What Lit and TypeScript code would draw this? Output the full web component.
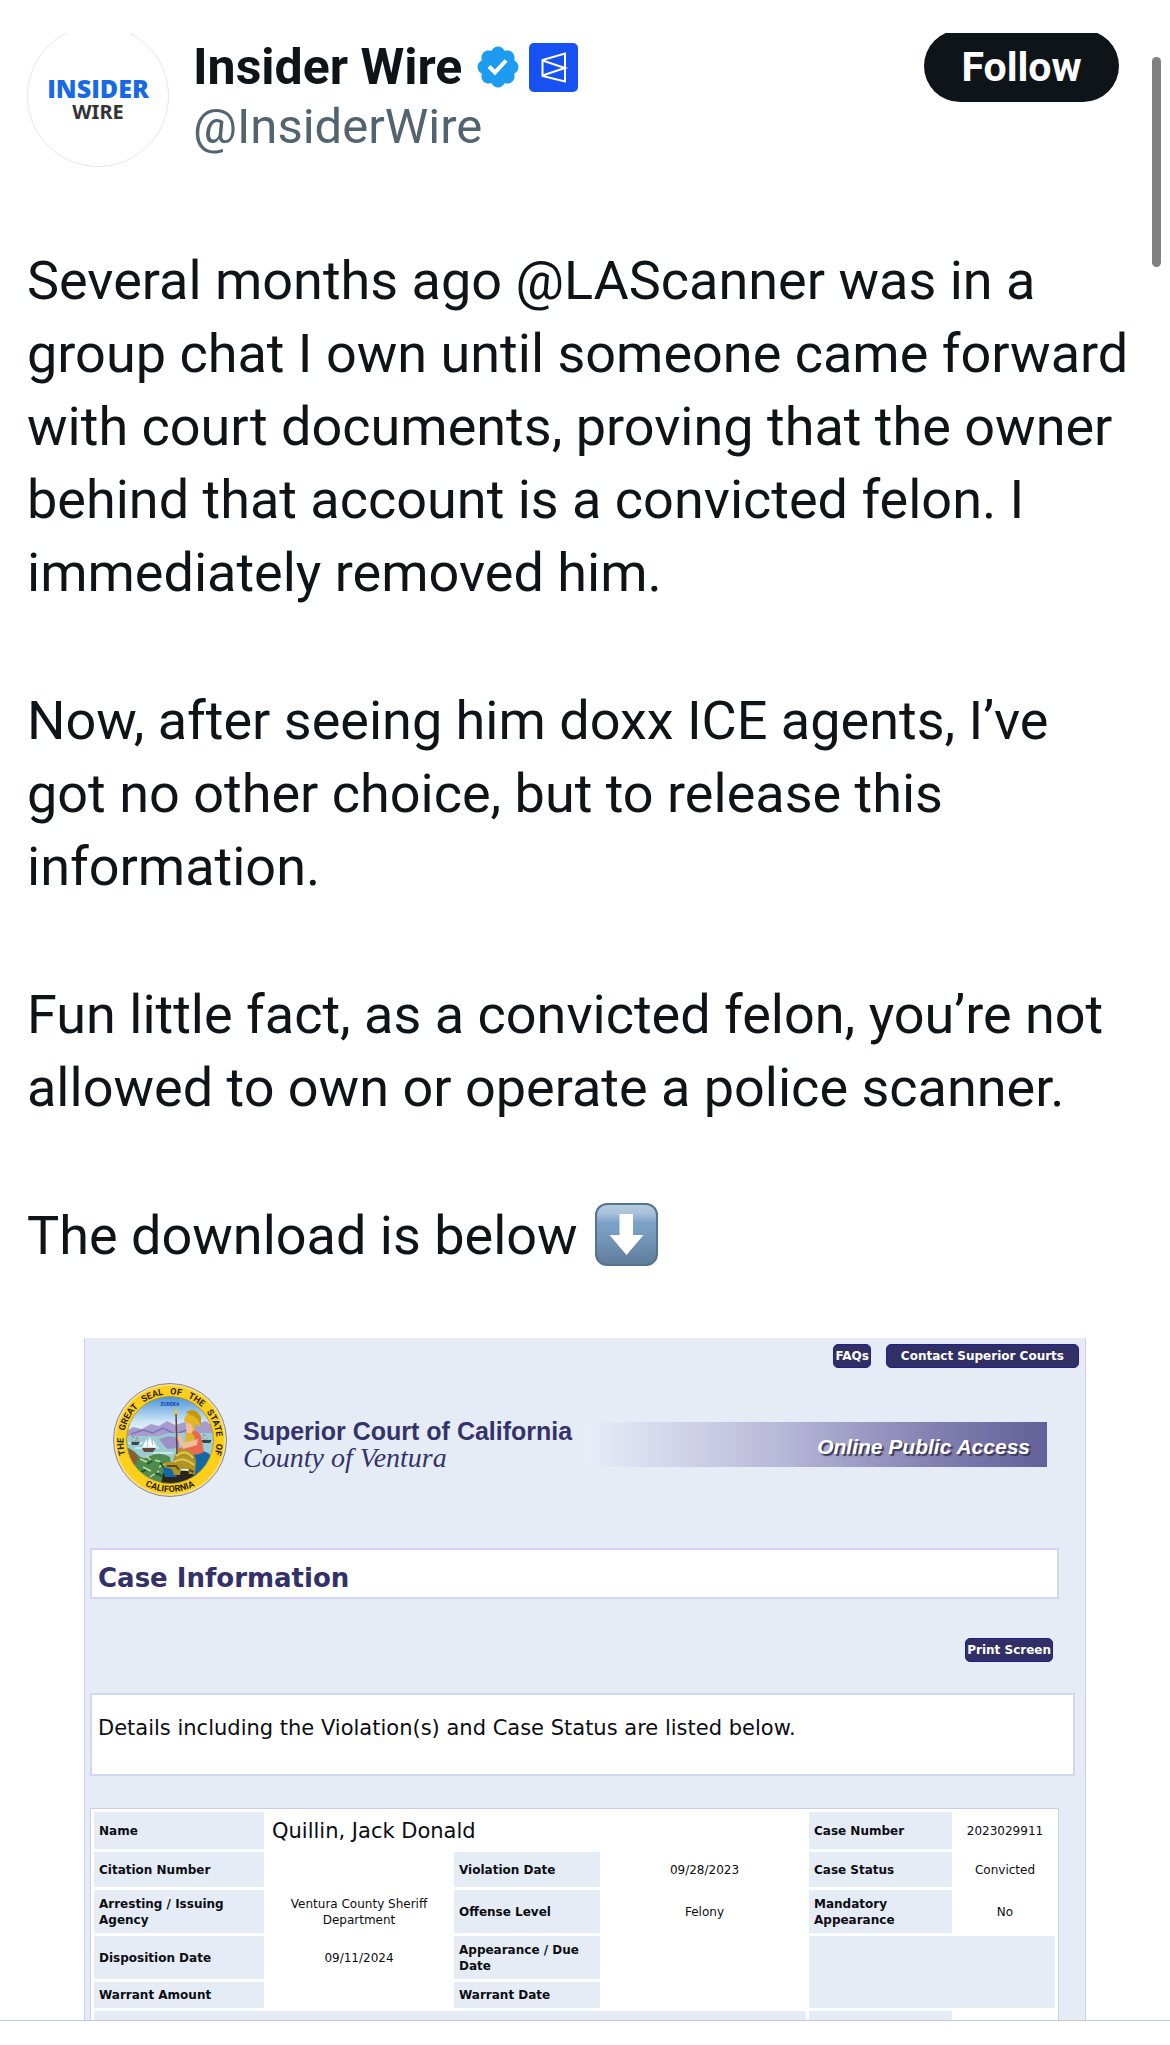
import { LitElement, html, css, nothing } from "lit";
import { customElement } from "lit/decorators.js";
import { classMap } from "lit/directives/class-map.js";

interface Cell {
  text?: string;
  label?: boolean;
  large?: boolean;
  colspan?: number;
  rowspan?: number;
}

const CASE_ROWS: { size: string; cells: Cell[] }[] = [
  {
    size: "tall",
    cells: [
      { text: "Name", label: true },
      { text: "Quillin, Jack Donald", large: true, colspan: 3 },
      { text: "Case Number", label: true },
      { text: "2023029911" },
    ],
  },
  {
    size: "medium",
    cells: [
      { text: "Citation Number", label: true },
      {},
      { text: "Violation Date", label: true },
      { text: "09/28/2023" },
      { text: "Case Status", label: true },
      { text: "Convicted" },
    ],
  },
  {
    size: "double",
    cells: [
      { text: "Arresting / Issuing Agency", label: true },
      { text: "Ventura County Sheriff Department" },
      { text: "Offense Level", label: true },
      { text: "Felony" },
      { text: "Mandatory Appearance", label: true },
      { text: "No" },
    ],
  },
  {
    size: "double",
    cells: [
      { text: "Disposition Date", label: true },
      { text: "09/11/2024" },
      { text: "Appearance / Due Date", label: true },
      {},
      { label: true, colspan: 2, rowspan: 2 },
    ],
  },
  {
    size: "short",
    cells: [
      { text: "Warrant Amount", label: true },
      {},
      { text: "Warrant Date", label: true },
      {},
    ],
  },
  {
    size: "tall",
    cells: [{ label: true, colspan: 4 }, { label: true }, {}],
  },
];

@customElement("state-seal")
class StateSeal extends LitElement {
  static styles = css`
    :host {
      display: block;
      flex: none;
    }
    svg {
      display: block;
    }
    .ring {
      font: bold 9px Roboto, "Liberation Sans", sans-serif;
      fill: #2a2208;
    }
    .motto {
      font: bold 5px Roboto, "Liberation Sans", sans-serif;
      fill: #1c3fa8;
    }
  `;

  render() {
    const gap = "\u00a0\u00a0\u00a0";
    return html`
      <svg width="114" height="114" viewBox="0 0 114 114" role="img" aria-label="State seal">
        <defs>
          <linearGradient id="sky" x1="0" y1="0" x2="0" y2="1">
            <stop offset="0" stop-color="#3f8fd6" />
            <stop offset="0.3" stop-color="#cfe6f6" />
            <stop offset="0.5" stop-color="#ffffff" />
          </linearGradient>
          <clipPath id="disc"><circle cx="57" cy="57" r="43.5" /></clipPath>
          <path id="top" d="M 13 73 A 46.500 46.500 0 1 1 101 73" />
          <path id="bottom" d="M 12 84 A 53 53 0 0 0 102 84" />
        </defs>
        <circle cx="57" cy="57" r="56.500" fill="#f7df86" stroke="#8a8598" />
        <circle cx="57" cy="57" r="54" fill="#fccf1b" />
        <g clip-path="url(#disc)">
          <rect x="12" y="12" width="90" height="90" fill="url(#sky)" />
          <path d="M12 49 L20 44 L29 46 L38 41 L46 43 L54 38 L62 42 L72 39 L84 41 L93 38 L103 46 V62 H12Z" fill="#a69ccd" />
          <path d="M18 51 L30 47 L40 50 L50 45 L62 51 L74 47" fill="none" stroke="#7c75b4" stroke-width="1.500" />
          <path d="M12 53 H46 L56 50 H103 V86 H12Z" fill="#9ccbd2" />
          <path d="M46 56 L56 53 L66 55 V65 L54 66 L49 60Z" fill="#9c90c6" />
          <path d="M15 60 H30 M22 65 H46 M40 70 H60 M86 58 H100" stroke="#d9eff0" stroke-width="1.500" />
          <path d="M18 59 h9 l-2 3 h-6z M88 57 h11 l-2 3 h-7z" fill="#33464c" />
          <path d="M20 58 v-5 l3 5z M24 58 v-4 l2 4z M91 56 v-5 l3 5z" fill="#f4f6f4" stroke="#33464c" stroke-width="0.400" />
          <path d="M29 65 H43 L40 69 H31Z" fill="#5a4a3a" />
          <path d="M30 64 Q31 59 34 56 V64Z M35 64 Q34 58 37 54 L40 64Z M40 64 L40 57 L44 64Z" fill="#ffffff" />
          <path d="M12 64 Q20 66 25 72 Q30 78 37 73 Q45 68 57 74 L61 102 H12Z" fill="#4f8b50" />
          <path d="M12 66 Q23 67 25 76 L19 86 L12 82Z" fill="#8c5a38" />
          <path d="M27 76 l7 3 M30 84 l8 4 M42 77 l6 2 M37 94 l9 -6 M46 84 l6 -3 M33 73 l5 4" stroke="#c9e08e" stroke-width="1.500" />
          <path d="M34 81 l5 -3 M42 90 l7 3 M47 79 l4 6 M28 89 l5 -2" stroke="#1d5a35" stroke-width="2" />
          <path d="M50 90 Q70 84 92 92 L86 102 H48Z" fill="#29261d" />
          <path d="M79 69 Q92 66 97 72 L96 84 Q91 95 80 93Z" fill="#1668a4" />
          <path d="M50 86 Q54 78 60 82 L64 94 H52Z" fill="#1668a4" />
          <path d="M74 48 Q85 46 88 53 L91 69 Q83 74 68 70 L64 66 L74 62Z" fill="#e96a4f" />
          <path d="M73 48 Q80 48 82 56 L79 63 L72 62Z" fill="#dcb52a" />
          <path d="M64 55 L68 52 L71 60 L85 56 L84 62 L70 66Z" fill="#f3bd9c" />
          <path d="M73 39 Q80 36 81 43 L79 50 H74 L73 45Z" fill="#f3bd9c" />
          <path d="M71 38 Q72 31 78 29 Q87 31 88 43 Q85 44 83 40 L81 49 L78 41Z" fill="#e3b71f" />
          <path d="M73 29 Q82 23 88 34 L88 43 Q84 32 77 32Z" fill="#c5980d" />
          <path d="M60 79 Q62 66 71 66 Q82 68 83 79 L82 91 H76 L75 86 H68 L67 92 H61 L59 86 L51 84 L52 79Z" fill="#b19524" />
          <path d="M63 73 Q72 65 80 75 M61 79 Q70 73 81 82" fill="none" stroke="#e1ca54" stroke-width="2" />
          <path d="M54 83 h9 l3 4 M76 87 l5 2" fill="none" stroke="#5c4a12" stroke-width="2" />
          <path d="M63 29 L64 71" stroke="#6f3b30" stroke-width="1.500" />
          <path d="M63 24 L65 31 H61Z" fill="#e8c43a" />
          <text class="motto" x="57" y="23" text-anchor="middle">EUREKA</text>
        </g>
        <circle cx="57" cy="57" r="43.500" fill="none" stroke="#a88d28" stroke-width="0.800" />
        <text class="ring" text-anchor="middle"><textPath href="#top" startOffset="50%">${["THE", "GREAT", "SEAL", "OF", "THE", "STATE", "OF"].join(gap)}</textPath></text>
        <text class="ring" text-anchor="middle"><textPath href="#bottom" startOffset="50%">CALIFORNIA</textPath></text>
      </svg>
    `;
  }
}

@customElement("court-record")
class CourtRecord extends LitElement {
  static styles = css`
    :host {
      display: block;
      box-sizing: border-box;
      padding: 5px 6px 0 5px;
      background: #e6ecf6;
      border: 1px solid #ccccf4;
      border-top-color: #e6ecf6;
      border-bottom: 0;
      color: #0c0c12;
      font: 12px/16px "DejaVu Sans", sans-serif;
    }
    .links {
      display: flex;
      justify-content: flex-end;
      gap: 15px;
    }
    .link {
      box-sizing: border-box;
      height: 24px;
      padding: 0 1px;
      border: 1px solid #20208c;
      border-radius: 5px;
      background: #312f66;
      color: #fff;
      font: bold 12px/22px "DejaVu Sans", sans-serif;
      text-align: center;
      text-decoration: none;
    }
    .contact {
      padding: 0 14px;
    }
    .masthead {
      display: flex;
      align-items: center;
      gap: 16px;
      margin: 15px 32px 0 23px;
    }
    .court {
      padding-top: 8px;
      color: #35336b;
      white-space: nowrap;
    }
    .title {
      margin: 0;
      font: bold 25px/28px "Liberation Sans", sans-serif;
    }
    .county {
      margin: 0;
      font: italic 28px/26px "Liberation Serif", serif;
    }
    .access {
      flex: 1;
      box-sizing: border-box;
      height: 45px;
      margin-top: 8px;
      padding: 6px 17px 0 0;
      background: linear-gradient(90deg, #e8ecf8, #b8b8d8 42%, #7f7cae 78%, #636099);
      color: #fff;
      font: italic bold 21px/37px "Liberation Sans", sans-serif;
      text-align: right;
      text-shadow: 2px 2px 1px #3c3a5c;
    }
    .box {
      box-sizing: border-box;
      border: 2px solid #d3d5f4;
      background: #fff;
    }
    .heading {
      margin: 51px 20px 0 0;
      padding: 10px 6px 0;
      height: 51px;
      color: #33306a;
      font: bold 26px/36px "DejaVu Sans", sans-serif;
    }
    .print-row {
      display: flex;
      justify-content: flex-end;
      margin: 39px 26px 31px 0;
    }
    .note {
      margin: 0 4px 32px 0;
      padding: 19px 6px 31px;
      font-size: 21px;
      line-height: 29px;
    }
    .case {
      width: calc(100% - 20px);
      table-layout: fixed;
      border: 1px solid #ccccf8;
      border-collapse: separate;
      border-spacing: 3px;
      background: #fff;
    }
    .c1 {
      width: 170px;
    }
    .c2 {
      width: 184px;
    }
    .c3 {
      width: 146px;
    }
    .c5 {
      width: 143px;
    }
    .c6 {
      width: 100px;
    }
    .cell {
      padding: 0 4px;
      text-align: center;
      vertical-align: middle;
    }
    .label {
      padding: 0 5px;
      background: #e6ecf6;
      text-align: left;
    }
    .large {
      padding: 0 5px;
      font-size: 21px;
      text-align: left;
    }
    .tall {
      height: 37px;
    }
    .medium {
      height: 35px;
    }
    .double {
      height: 43px;
    }
    .short {
      height: 26px;
    }
  `;

  private cell(c: Cell) {
    const classes = classMap({ cell: true, label: !!c.label, large: !!c.large });
    const cols = c.colspan ?? nothing;
    const rows = c.rowspan ?? nothing;
    return c.label && c.text
      ? html`<th class=${classes} scope="row">${c.text}</th>`
      : html`<td class=${classes} colspan=${cols} rowspan=${rows}>${c.text ?? ""}</td>`;
  }

  render() {
    return html`
      <nav class="links">
        <a class="link" href="#faqs">FAQs</a>
        <a class="link contact" href="#contact">Contact Superior Courts</a>
      </nav>
      <header class="masthead">
        <state-seal></state-seal>
        <div class="court">
          <h2 class="title">Superior Court of California</h2>
          <p class="county">County of Ventura</p>
        </div>
        <div class="access">Online Public Access</div>
      </header>
      <h3 class="box heading">Case Information</h3>
      <div class="print-row"><button class="link" type="button">Print Screen</button></div>
      <p class="box note">Details including the Violation(s) and Case Status are listed below.</p>
      <table class="case">
        <colgroup>
          <col class="c1" /><col class="c2" /><col class="c3" /><col /><col class="c5" /><col class="c6" />
        </colgroup>
        <tbody>
          ${CASE_ROWS.map((r) => html`<tr class=${r.size}>${r.cells.map((c) => this.cell(c))}</tr>`)}
        </tbody>
      </table>
    `;
  }
}

@customElement("app-root")
class AppRoot extends LitElement {
  static styles = css`
    :host {
      display: grid;
      grid-template-rows: 33px minmax(0, 1fr) 25px;
      position: relative;
      height: 100vh;
      background: #fff;
      color: #0f1419;
      font-family: Roboto, "Liberation Sans", sans-serif;
    }
    .feed {
      grid-row: 2;
      overflow: hidden;
    }
    .footer {
      grid-row: 3;
      box-sizing: border-box;
      border-top: 1px solid #bccbd8;
    }
    .author {
      display: flex;
      align-items: flex-start;
      gap: 24px;
      margin-top: -8px;
      padding: 0 51px 0 27px;
    }
    .avatar {
      box-sizing: border-box;
      display: flex;
      flex: none;
      flex-direction: column;
      align-items: center;
      justify-content: center;
      width: 142px;
      height: 142px;
      padding-top: 8px;
      border: 1px solid #e4e7ea;
      border-radius: 50%;
    }
    .brand {
      color: #1769e6;
      font: 800 25px/24px "Open Sans", sans-serif;
    }
    .sub {
      color: #333;
      font: bold 20px/24px "Noto Sans", sans-serif;
    }
    .names {
      flex: 1;
      padding-top: 12px;
    }
    .name {
      display: flex;
      align-items: center;
      margin: 0;
      font-size: 50px;
      line-height: 60px;
    }
    .verified {
      margin: 0 7px 0 12px;
    }
    .handle {
      display: inline-block;
      color: #536471;
      font-size: 49px;
      line-height: 60px;
      text-decoration: none;
    }
    .follow {
      width: 195px;
      height: 72px;
      margin-top: 5px;
      padding: 1px 0 0;
      border: 0;
      border-radius: 36px;
      background: #0f1419;
      color: #fff;
      font: bold 41px/72px Roboto, sans-serif;
    }
    .body {
      display: grid;
      gap: 75px;
      padding: 77px 36px 66px 27px;
      font-size: 54px;
      line-height: 73px;
    }
    .para {
      margin: 0;
    }
    .emoji {
      margin-left: 4px;
      vertical-align: -12px;
    }
    .attachment {
      margin: 0 84px;
    }
    .thumb {
      position: absolute;
      top: 57px;
      right: 9px;
      width: 9px;
      height: 210px;
      border-radius: 5px;
      background: #808080;
    }
  `;

  render() {
    return html`
      <article class="feed">
        <header class="author">
          <div class="avatar"><span class="brand">INSIDER</span><span class="sub">WIRE</span></div>
          <div class="names">
            <h1 class="name">
              Insider Wire
              <svg class="verified" width="48" height="48" viewBox="0 0 22 22" role="img" aria-label="Verified">
                <path fill="#1d9bf0" d="M20.396 11c-.018-.646-.215-1.275-.57-1.816-.354-.54-.852-.972-1.438-1.246.223-.607.27-1.264.14-1.897-.131-.634-.437-1.218-.882-1.687-.47-.445-1.053-.75-1.687-.882-.633-.13-1.29-.083-1.897.14-.273-.587-.704-1.086-1.245-1.44S11.647 1.62 11 1.604c-.646.017-1.273.213-1.813.568s-.969.854-1.24 1.44c-.608-.223-1.267-.272-1.902-.14-.635.13-1.22.436-1.69.882-.445.47-.749 1.055-.878 1.688-.13.633-.08 1.29.144 1.896-.587.274-1.087.705-1.443 1.245-.356.54-.555 1.17-.574 1.817.02.647.218 1.276.574 1.817.356.54.856.972 1.443 1.245-.224.606-.274 1.263-.144 1.896.13.634.433 1.218.877 1.688.47.443 1.054.747 1.687.878.633.132 1.29.084 1.897-.136.274.586.705 1.084 1.246 1.439.54.354 1.17.551 1.816.569.647-.016 1.276-.213 1.817-.567s.972-.854 1.245-1.44c.604.239 1.266.296 1.903.164.636-.132 1.22-.447 1.68-.907.46-.46.776-1.044.908-1.681s.075-1.299-.165-1.903c.586-.274 1.084-.705 1.439-1.246.354-.54.551-1.17.569-1.816zM9.662 14.85l-3.429-3.428 1.293-1.302 2.072 2.072 4.4-4.794 1.347 1.246z" />
              </svg>
              <svg width="49" height="49" viewBox="0 0 49 49" role="img" aria-label="Affiliate">
                <rect width="49" height="49" rx="5" fill="#1751f2" />
                <path d="M36 10.500 V38.500 L13.500 33 V17Z M13.500 17.500 L36 25 L13.500 32.500" fill="none" stroke="#fff" stroke-width="2" stroke-linejoin="miter" />
              </svg>
            </h1>
            <a class="handle" href="#InsiderWire">@InsiderWire</a>
          </div>
          <button class="follow" type="button">Follow</button>
        </header>
        <div class="body">
          <p class="para">Several months ago @LAScanner was in a group chat I own until someone came forward with court documents, proving that the owner behind that account is a convicted felon. I immediately removed him.</p>
          <p class="para">Now, after seeing him doxx ICE agents, I’ve got no other choice, but to release this information.</p>
          <p class="para">Fun little fact, as a convicted felon, you’re not allowed to own or operate a police scanner.</p>
          <p class="para">The download is below
            <svg class="emoji" width="63" height="63" viewBox="0 0 63 63" role="img" aria-label="Down arrow">
              <defs>
                <linearGradient id="key" x1="0" y1="0" x2="0" y2="1">
                  <stop offset="0" stop-color="#b9cbdc" />
                  <stop offset="0.150" stop-color="#a9c2da" />
                  <stop offset="0.300" stop-color="#7ea3c8" />
                  <stop offset="0.600" stop-color="#7394b6" />
                  <stop offset="1" stop-color="#5f7c98" />
                </linearGradient>
              </defs>
              <rect x="1" y="1" width="61" height="61" rx="11" fill="url(#key)" stroke="#557290" stroke-width="2" />
              <path d="M24.500 11 H38 V32 H48.500 L31.500 52 L14.500 32 H24.500Z" fill="#fff" />
            </svg>
          </p>
        </div>
        <court-record class="attachment"></court-record>
      </article>
      <footer class="footer"></footer>
      <div class="thumb"></div>
    `;
  }
}
